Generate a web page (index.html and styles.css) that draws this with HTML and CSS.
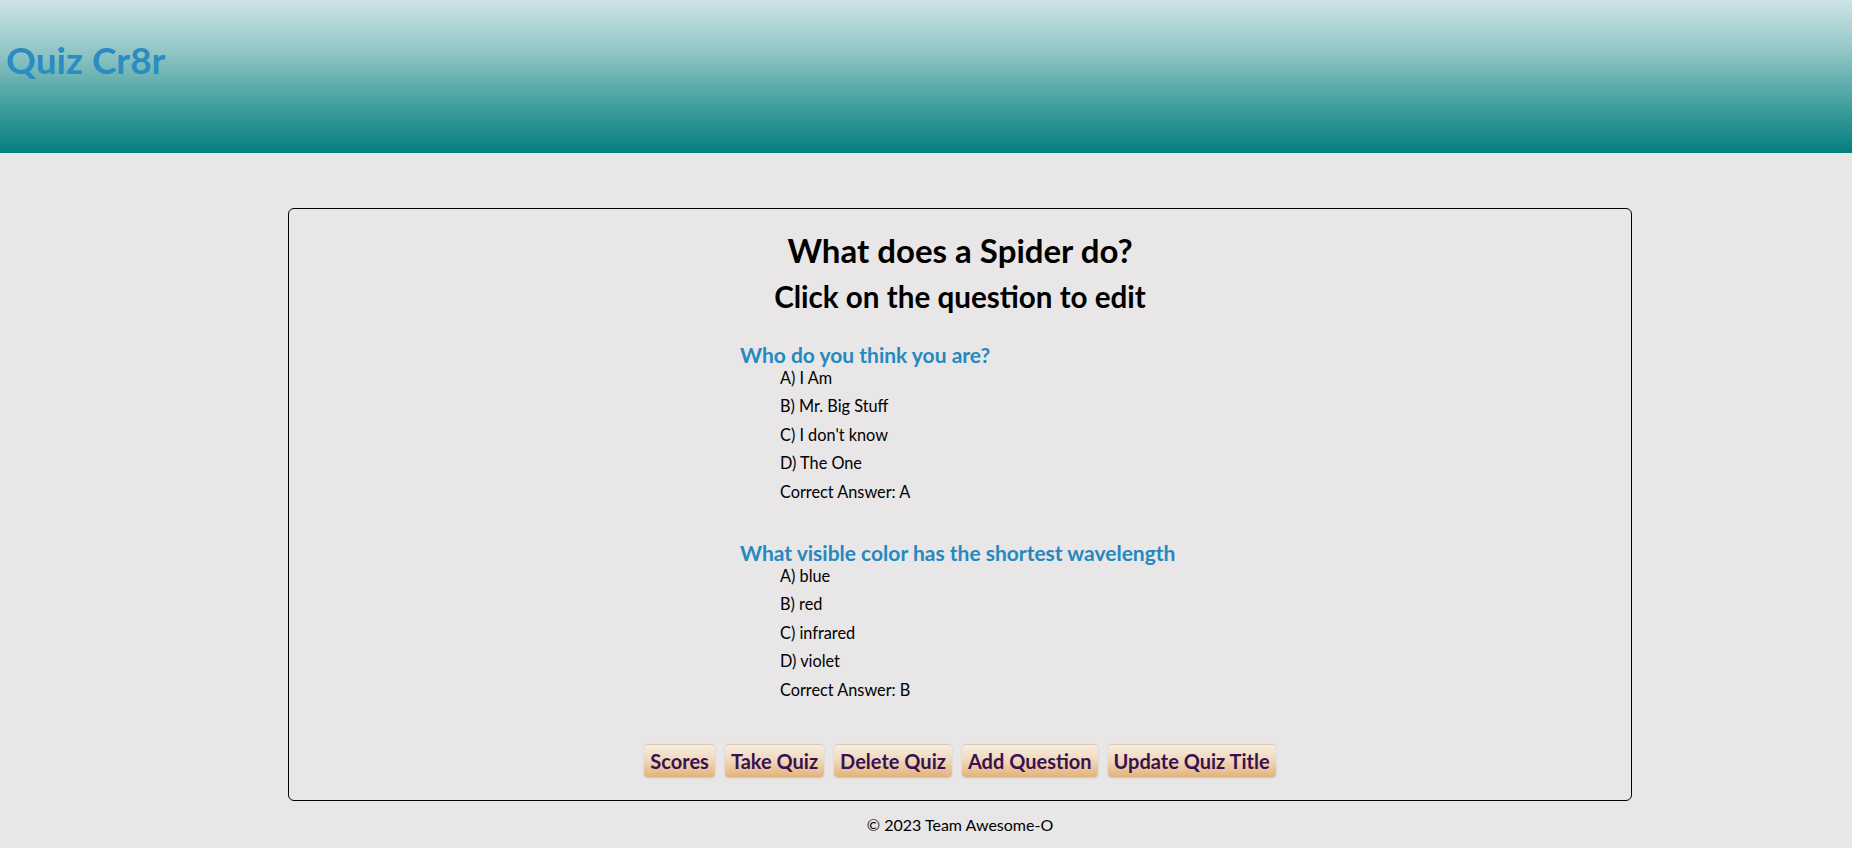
FILE: index.html
```html
<!DOCTYPE html>
<html>
<head>
<meta charset="utf-8">
<title>Quiz Cr8r</title>
<link rel="stylesheet" href="styles.css">
</head>
<body>
<header class="site-header">
  <h1 class="brand">Quiz Cr8r</h1>
</header>
<main class="card">
  <h1 class="quiz-title">What does a Spider do?</h1>
  <h2 class="subtitle">Click on the question to edit</h2>
  <section class="questions">
    <div class="question">
      <h3 class="q-text">Who do you think you are?</h3>
      <div class="answers">
        <p class="answer">A) I Am</p>
        <p class="answer">B) Mr. Big Stuff</p>
        <p class="answer">C) I don't know</p>
        <p class="answer">D) The One</p>
        <p class="answer">Correct Answer: A</p>
      </div>
    </div>
    <div class="question">
      <h3 class="q-text">What visible color has the shortest wavelength</h3>
      <div class="answers">
        <p class="answer">A) blue</p>
        <p class="answer">B) red</p>
        <p class="answer">C) infrared</p>
        <p class="answer">D) violet</p>
        <p class="answer">Correct Answer: B</p>
      </div>
    </div>
  </section>
  <div class="actions">
    <button class="btn">Scores</button>
    <button class="btn">Take Quiz</button>
    <button class="btn">Delete Quiz</button>
    <button class="btn">Add Question</button>
    <button class="btn">Update Quiz Title</button>
  </div>
</main>
<footer class="site-footer">© 2023 Team Awesome-O</footer>
</body>
</html>
```
FILE: styles.css
```css
* { box-sizing: border-box; }
body {
  margin: 0;
  background: #e8e6e6;
  font-family: Lato, "Open Sans", sans-serif;
  color: #000;
}
.site-header {
  height: 153px;
  background: linear-gradient(to bottom, #cde3e5 0%, #8fc4c4 35%, #3f9d9d 70%, #047f7f 100%);
  padding: 41px 0 0 6px;
}
.brand {
  margin: 0;
  font-size: 37px;
  line-height: 38px;
  font-weight: 700;
  color: #2a8cc2;
}
.card {
  margin: 55px 220px 0 288px;
  border: 1px solid #000;
  border-radius: 6px;
  padding: 21px 0 23px;
}
.quiz-title {
  margin: 0;
  text-align: center;
  font-size: 33px;
  line-height: 40px;
  font-weight: 700;
}
.subtitle {
  margin: 11px 0 0;
  text-align: center;
  font-size: 29.6px;
  line-height: 32px;
  font-weight: 700;
}
.questions {
  padding-left: 451px;
  margin-top: 32px;
}
.question + .question { margin-top: 37px; }
.q-text {
  margin: 0;
  font-size: 21px;
  line-height: 20px;
  font-weight: 700;
  color: #2389bf;
}
.answers { padding-left: 40px; margin-top: -1px; }
.answer {
  margin: 0;
  font-size: 16.3px;
  line-height: 28.4px;
}
.actions {
  display: flex;
  justify-content: center;
  gap: 10px;
  margin-top: 40px;
}
.btn {
  height: 33px;
  padding: 0 6px;
  border: none;
  border-top: 1px solid #dcc6ad;
  border-radius: 4px;
  background: linear-gradient(to bottom, #f6ede2 0%, #f0d7b8 50%, #e3b27b 100%);
  box-shadow: 0 1px 2px rgba(0,0,0,0.15);
  font-family: inherit;
  font-size: 20px;
  font-weight: 700;
  color: #371253;
}
.site-footer {
  margin: 14px 220px 0 288px;
  text-align: center;
  font-size: 16px;
  line-height: 20px;
}
```
